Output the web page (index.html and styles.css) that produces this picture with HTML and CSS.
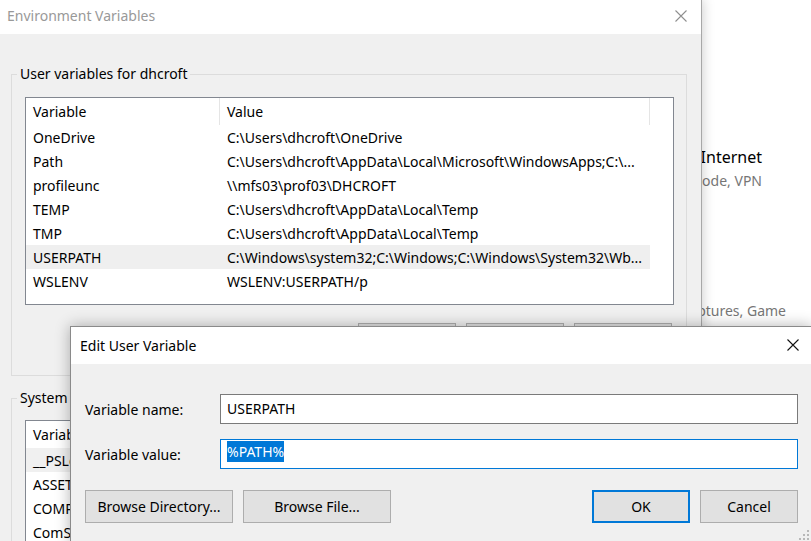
FILE: index.html
```html
<!DOCTYPE html>
<html lang="en">
<head>
<meta charset="utf-8">
<title>Environment Variables</title>
<link rel="stylesheet" href="styles.css">
</head>
<body>
<div class="desktop">
  <div class="settings">
    <div class="tile t1">
      <div class="tile-title">Network &amp; Internet</div>
      <div class="tile-desc">Wi-Fi, airplane mode, VPN</div>
    </div>
    <div class="tile t2">
      <div class="tile-title">Gaming</div>
      <div class="tile-desc">Xbox Game Bar, captures, Game<br>Mode</div>
    </div>
  </div>

  <div class="window env">
    <div class="titlebar env-titlebar">
      <span class="title inactive">Environment Variables</span>
      <svg class="close-x" width="12" height="12" viewBox="0 0 12 12"><path d="M0.5 0.5 L11.5 11.5 M11.5 0.5 L0.5 11.5" stroke="#8f8f8f" stroke-width="1.1" fill="none"/></svg>
    </div>
    <div class="env-body">
      <fieldset class="group group-user">
        <legend>User variables for dhcroft</legend>
        <div class="listview lv-user">
          <div class="lv-header">
            <span class="c1 hcell">Variable</span>
            <span class="c2 hcell">Value</span>
          </div>
          <div class="lv-row"><span class="c1">OneDrive</span><span class="c2">C:\Users\dhcroft\OneDrive</span></div>
          <div class="lv-row"><span class="c1">Path</span><span class="c2">C:\Users\dhcroft\AppData\Local\Microsoft\WindowsApps;C:\...</span></div>
          <div class="lv-row"><span class="c1">profileunc</span><span class="c2">\\mfs03\prof03\DHCROFT</span></div>
          <div class="lv-row"><span class="c1">TEMP</span><span class="c2">C:\Users\dhcroft\AppData\Local\Temp</span></div>
          <div class="lv-row"><span class="c1">TMP</span><span class="c2">C:\Users\dhcroft\AppData\Local\Temp</span></div>
          <div class="lv-row selected"><span class="c1">USERPATH</span><span class="c2">C:\Windows\system32;C:\Windows;C:\Windows\System32\Wb...</span></div>
          <div class="lv-row"><span class="c1">WSLENV</span><span class="c2">WSLENV:USERPATH/p</span></div>
        </div>
        <div class="btnrow">
          <button class="btn btn-env"></button>
          <button class="btn btn-env"></button>
          <button class="btn btn-env"></button>
        </div>
      </fieldset>

      <fieldset class="group group-system">
        <legend>System variables</legend>
        <div class="listview lv-system">
          <div class="lv-header">
            <span class="c1 hcell">Variable</span>
            <span class="c2 hcell"></span>
          </div>
          <div class="lv-row hover"><span class="c1">__PSLockDownPolicy</span><span class="c2"></span></div>
          <div class="lv-row"><span class="c1">ASSETSPATH</span><span class="c2"></span></div>
          <div class="lv-row"><span class="c1">COMPUTERNAME</span><span class="c2"></span></div>
          <div class="lv-row"><span class="c1">ComSpec</span><span class="c2"></span></div>
        </div>
      </fieldset>
    </div>
  </div>

  <div class="window edit">
    <div class="titlebar edit-titlebar">
      <span class="title">Edit User Variable</span>
      <svg class="close-x" width="12" height="12" viewBox="0 0 12 12"><path d="M0.5 0.5 L11.5 11.5 M11.5 0.5 L0.5 11.5" stroke="#111" stroke-width="1.1" fill="none"/></svg>
    </div>
    <div class="edit-body">
      <div class="field-row">
        <label class="field-label">Variable name:</label>
        <div class="textbox">USERPATH</div>
      </div>
      <div class="field-row">
        <label class="field-label">Variable value:</label>
        <div class="textbox focused"><span class="sel">%PATH%</span></div>
      </div>
      <div class="edit-buttons">
        <button class="btn btn-wide">Browse Directory...</button>
        <button class="btn btn-wide">Browse File...</button>
        <span class="spacer"></span>
        <button class="btn btn-std btn-default">OK</button>
        <button class="btn btn-std">Cancel</button>
      </div>
    </div>
    <svg class="grip" width="10" height="10" viewBox="0 0 10 10">
      <g fill="#b8b8b8">
        <rect x="8" y="0" width="2" height="2"/>
        <rect x="4" y="4" width="2" height="2"/><rect x="8" y="4" width="2" height="2"/>
        <rect x="0" y="8" width="2" height="2"/><rect x="4" y="8" width="2" height="2"/><rect x="8" y="8" width="2" height="2"/>
      </g>
    </svg>
  </div>
</div>
</body>
</html>
```

FILE: styles.css
```css
* { box-sizing: border-box; }

html, body {
  margin: 0;
  padding: 0;
}

body {
  width: 811px;
  height: 541px;
  overflow: hidden;
  background: #ffffff;
  font-family: "Noto Sans", "Open Sans", sans-serif;
  font-size: 14px;
  color: #000;
}

.desktop {
  position: relative;
  width: 811px;
  height: 541px;
  overflow: hidden;
}

/* background settings page */
.settings {
  position: absolute;
  top: 0;
  left: 520px;
  right: 0;
  padding-top: 145px;
  display: flex;
  flex-direction: column;
  gap: 82px;
}
.tile { text-align: right; }
.tile-title { font-size: 16px; line-height: 24px; color: #000; }
.tile-desc { font-size: 14px; line-height: 24px; color: #767676; }
.t1 { padding-right: 49px; }
.t2 { padding-right: 25px; }
.t2 .tile-title { text-align: left; }

/* windows */
.window {
  position: absolute;
  background: #f0f0f0;
}

.titlebar {
  display: flex;
  align-items: center;
  justify-content: space-between;
  background: #fff;
}
.title { font-size: 14px; white-space: nowrap; }
.title.inactive { color: #999; }
.close-x { display: block; flex: none; }

/* Environment Variables window */
.env {
  left: -10px;
  top: -1px;
  width: 712px;
  height: 560px;
  border: 1px solid #a8a8a8;
  box-shadow: 0 0 12px rgba(0,0,0,0.22);
}
.env-titlebar {
  height: 34px;
  padding: 0 14px 3px 16px;
}
.env-body {
  padding: 30px 14px 0 20px;
}

.group {
  margin: 0;
  padding: 0 0 19px 0;
  border: 1px solid #dcdcdc;
  min-width: 0;
}
.group legend {
  margin-left: 5px;
  padding: 0 3px;
  line-height: 20px;
  font-size: 14px;
}
.group-system {
  margin-top: 12px;
}

.listview {
  margin: 13px 12px 0 13px;
  height: 208px;
  border: 1px solid #828790;
  background: #fff;
}
.lv-system {
  margin-top: 12px;
  height: 200px;
}

.lv-header {
  display: flex;
  height: 27px;
}
.lv-header .c1 { width: 194px; border-right: 1px solid #e5e5e5; }
.lv-header .c2 { width: 430px; border-right: 1px solid #e5e5e5; }
.hcell {
  display: flex;
  align-items: center;
  padding-left: 7px;
  padding-bottom: 1px;
}

.lv-row {
  display: flex;
  align-items: center;
  width: 624px;
  height: 24px;
  white-space: nowrap;
}
.lv-row .c1 { width: 194px; padding-left: 7px; overflow: hidden; }
.lv-row .c2 { width: 430px; padding-left: 7px; overflow: hidden; }
.lv-row.selected { background: #efefef; }
.lv-row.hover { background: #f0f0f0; }

.btnrow {
  display: flex;
  justify-content: flex-end;
  gap: 10px;
  margin: 18px 14px 0 0;
}

.btn {
  font-family: inherit;
  font-size: 14px;
  color: #000;
  background: #e1e1e1;
  border: 1px solid #adadad;
  height: 33px;
  padding: 0;
  margin: 0;
}
.btn-env { width: 98px; }

/* Edit User Variable dialog */
.edit {
  left: 70px;
  top: 326px;
  width: 742px;
  height: 217px;
  border: 1px solid #8a8a8a;
  box-shadow: 0 0 14px rgba(0,0,0,0.3);
}
.edit-titlebar {
  height: 37px;
  padding: 0 12px 1px 9px;
}
.edit-body {
  display: flex;
  flex-direction: column;
  padding: 30px 13px 0 14px;
}
.field-row {
  display: flex;
  align-items: center;
  margin-bottom: 15px;
}
.field-label {
  width: 135px;
  flex: none;
}
.textbox {
  flex: 1;
  height: 30px;
  line-height: 28px;
  padding-left: 6px;
  background: #fff;
  border: 1px solid #7a7a7a;
  white-space: nowrap;
}
.textbox.focused {
  border-color: #0078d7;
}
.sel {
  display: inline-block;
  background: #0078d7;
  color: #fff;
  line-height: 21px;
  vertical-align: 2px;
}

.edit-buttons {
  display: flex;
  gap: 10px;
  margin-top: 6px;
}
.spacer { flex: 1; }
.btn-wide { width: 148px; }
.btn-std { width: 98px; }
.btn-default {
  border: 2px solid #0078d7;
}

.grip {
  position: absolute;
  right: 2px;
  bottom: 2px;
}
```
